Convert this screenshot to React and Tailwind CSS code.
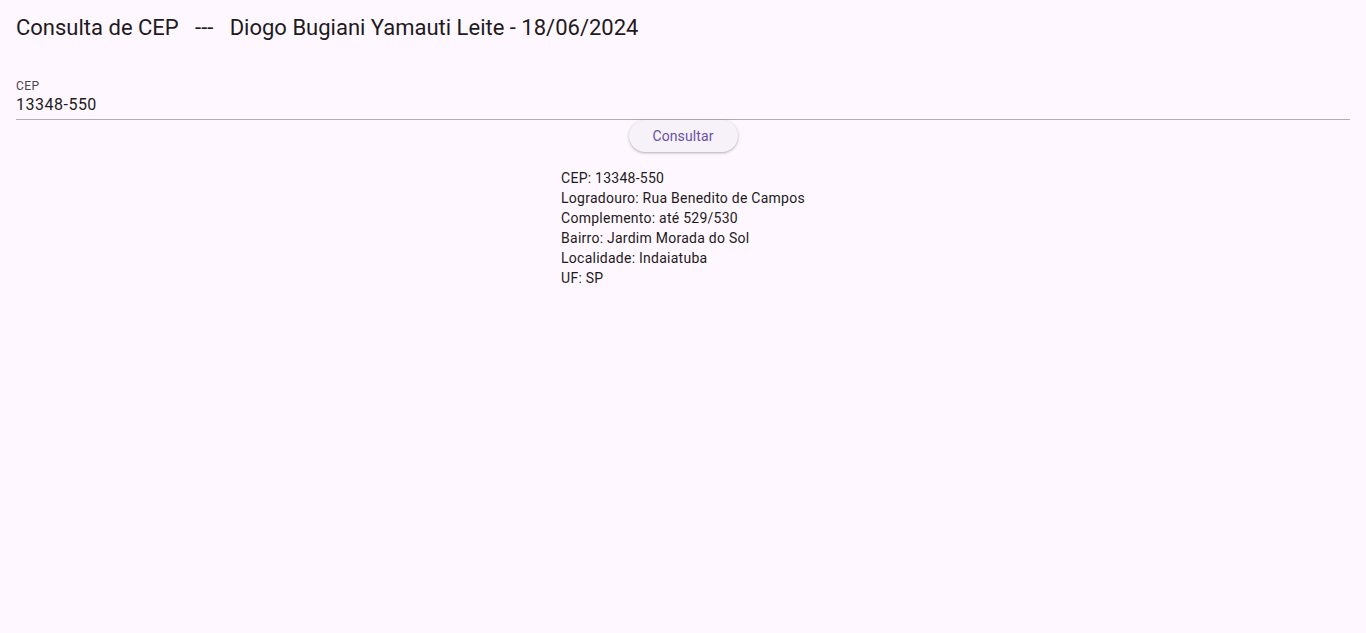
export default function App() {
    const result = [
        "CEP: 13348-550",
        "Logradouro: Rua Benedito de Campos",
        "Complemento: até 529/530",
        "Bairro: Jardim Morada do Sol",
        "Localidade: Indaiatuba",
        "UF: SP",
    ]

    return (
        <div className="min-h-[633px] w-full bg-[#fef7ff] text-[#1d1b20] font-['Roboto',sans-serif]">
            {/* APP BAR */}
            <header className="h-14 flex items-center px-4">
                <h1 className="text-[22px] leading-7 font-normal whitespace-pre">
                    {"Consulta de CEP   ---   Diogo Bugiani Yamauti Leite - 18/06/2024"}
                </h1>
            </header>

            {/* BODY */}
            <main className="px-4 pt-[22px] flex flex-col items-center">
                <div className="w-full">
                    <label className="block text-[12px] leading-4 tracking-[0.4px] text-[#49454f]">CEP</label>
                    <input
                        defaultValue="13348-550"
                        className="-mt-[2px] block w-full h-[28px] p-0 pb-[2px] bg-transparent text-[16px] leading-6 tracking-[0.5px] text-[#1d1b20] outline-none border-b border-[#b2abb5]"
                    />
                </div>

                <button className="h-8 w-[109px] rounded-full bg-[#f7f2fa] text-[14px] font-normal tracking-[0.1px] text-[#6750a4] shadow-[0_1px_2px_rgba(0,0,0,0.2),0_1px_3px_1px_rgba(0,0,0,0.08)]">
                    Consultar
                </button>

                <div className="mt-4 flex flex-col text-[14px] leading-5 tracking-[0.25px]">
                    {result.map((line) => (
                        <span key={line}>{line}</span>
                    ))}
                </div>
            </main>
        </div>
    )
}
